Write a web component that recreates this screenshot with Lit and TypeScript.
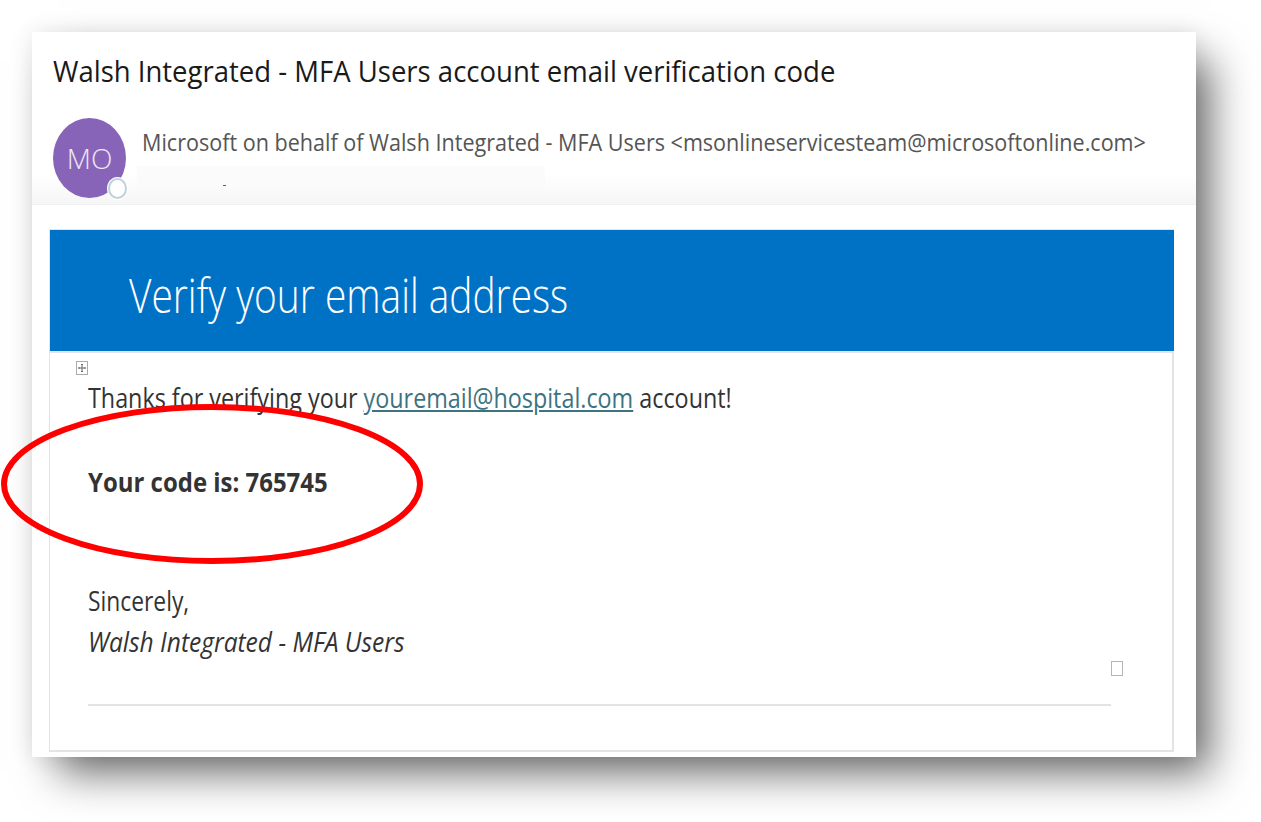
import { LitElement, css, html } from 'lit';
import { customElement } from 'lit/decorators.js';

@customElement('app-root')
class AppRoot extends LitElement {
  static styles = css`
    :host {
      display: block;
      width: 1261px;
      height: 822px;
      box-sizing: border-box;
      padding: 32px 0 0 32px;
      background: #fff;
      font-family: 'Open Sans', 'Noto Sans', sans-serif;
      color: #333;
      overflow: hidden;
    }

    .card {
      position: relative;
      width: 1164px;
      height: 725px;
      background: #fff;
      box-shadow: 20px 22px 40px -6px rgba(0, 0, 0, 0.58), 0 0 22px rgba(0, 0, 0, 0.09);
    }

    .squeeze {
      display: block;
      width: max-content;
      white-space: nowrap;
      transform-origin: left center;
    }

    .head {
      height: 173px;
      box-sizing: border-box;
      padding: 19px 0 0 21px;
      background: linear-gradient(#fff 82%, #f6f6f6 100%);
      border-bottom: 1px solid #f0f0f0;
    }

    .title {
      font-size: 30px;
      line-height: 40px;
      color: #1a1a1a;
      transform: scaleX(0.917);
    }

    .sender {
      display: flex;
      gap: 16px;
      margin-top: 27px;
    }

    .avatar {
      position: relative;
      flex: none;
      width: 73px;
      height: 80px;
      border-radius: 50%;
      background: #8764b8;
      color: #efe6f6;
      font-size: 28px;
      font-weight: 300;
      display: flex;
      align-items: center;
      justify-content: center;
    }

    .presence {
      position: absolute;
      right: -1px;
      bottom: -1px;
      width: 19px;
      height: 21px;
      box-sizing: border-box;
      border: 2px solid #bfd2d8;
      border-radius: 50%;
      background: #fff;
      box-shadow: 0 0 0 1px #fff;
    }

    .from {
      margin-top: 7px;
    }

    .from-text {
      font-size: 24px;
      line-height: 34px;
      color: #555;
      transform: scaleX(0.898);
    }

    .redacted {
      position: relative;
      width: 408px;
      height: 20px;
      margin: 7px 0 0 -5px;
      background: #fbfbfb;
    }

    .redacted i {
      position: absolute;
      left: 86px;
      bottom: 0;
      width: 3px;
      height: 1px;
      background: #3b5fc0;
    }

    .panel {
      width: 1125px;
      height: 523px;
      margin: 24px 0 0 17px;
      box-sizing: border-box;
      border: 2px solid #e4e4e4;
      border-left-width: 1px;
      border-top: none;
      display: flex;
      flex-direction: column;
    }

    .banner {
      height: 122px;
      margin-right: -2px;
      background: #0072c6;
      border-top: 1px solid #e4e4e4;
      box-sizing: border-box;
      padding: 33px 0 0 79px;
      color: #fff;
      font-size: 48px;
      line-height: 64px;
      font-weight: 300;
    }

    .banner span {
      transform: scaleX(0.809);
    }

    .content {
      flex: 1;
      border-top: 2px solid #e4e4e4;
      padding: 8px 61px 0 38px;
      display: flex;
      flex-direction: column;
    }

    .handle {
      width: 12px;
      height: 14px;
      margin-left: -12px;
    }

    .line {
      font-size: 27px;
      line-height: 40px;
      transform: scaleX(0.845);
    }

    .line a {
      color: #3d7381;
      text-decoration: underline;
    }

    .thanks {
      margin-top: 3px;
      transform: scaleX(0.864);
    }

    .code {
      margin-top: 44px;
      font-weight: 700;
      transform: scaleX(0.887);
    }

    .sign-row {
      display: flex;
      justify-content: space-between;
      align-items: flex-end;
      margin-top: 79px;
    }

    .sig {
      font-style: italic;
      margin-top: 1px;
      transform: scaleX(0.909);
    }

    .box {
      width: 12px;
      height: 15px;
      border: 1px solid #b5b5b5;
      box-sizing: border-box;
      margin: 0 -12px -14px 0;
    }

    hr {
      width: 100%;
      height: 2px;
      border: none;
      background: #e3e3e3;
      margin: 42px 0 0;
    }

    .circle {
      position: absolute;
      left: -32px;
      top: 372px;
      width: 424px;
      height: 160px;
      overflow: visible;
    }
  `;

  render() {
    return html`
      <div class="card">
        <div class="head">
          <span class="squeeze title">Walsh Integrated - MFA Users account email verification code</span>
          <div class="sender">
            <div class="avatar">MO<span class="presence"></span></div>
            <div class="from">
              <span class="squeeze from-text">Microsoft on behalf of Walsh Integrated - MFA Users &lt;msonlineservicesteam@microsoftonline.com&gt;</span>
              <div class="redacted"><i></i></div>
            </div>
          </div>
        </div>
        <div class="panel">
          <div class="banner"><span class="squeeze">Verify your email address</span></div>
          <div class="content">
            <svg class="handle" viewBox="0 0 12 14" fill="none" stroke="#666" stroke-width="1">
              <rect x="0.5" y="0.5" width="11" height="13" stroke="#aaa"></rect>
              <path d="M6 3v8M2.5 7h7M5 4l1-1 1 1M5 10l1 1 1-1M3.5 6l-1 1 1 1M8.5 6l1 1-1 1"></path>
            </svg>
            <span class="squeeze line thanks">Thanks for verifying your <a>youremail@hospital.com</a> account!</span>
            <span class="squeeze line code">Your code is: 765745</span>
            <div class="sign-row">
              <div>
                <span class="squeeze line">Sincerely,</span>
                <span class="squeeze line sig">Walsh Integrated - MFA Users</span>
              </div>
              <div class="box"></div>
            </div>
            <hr />
          </div>
        </div>
        <svg class="circle" viewBox="0 0 424 160" fill="none">
          <ellipse cx="212" cy="80" rx="208" ry="77" stroke="#f00" stroke-width="6"></ellipse>
        </svg>
      </div>
    `;
  }
}

export default AppRoot;
